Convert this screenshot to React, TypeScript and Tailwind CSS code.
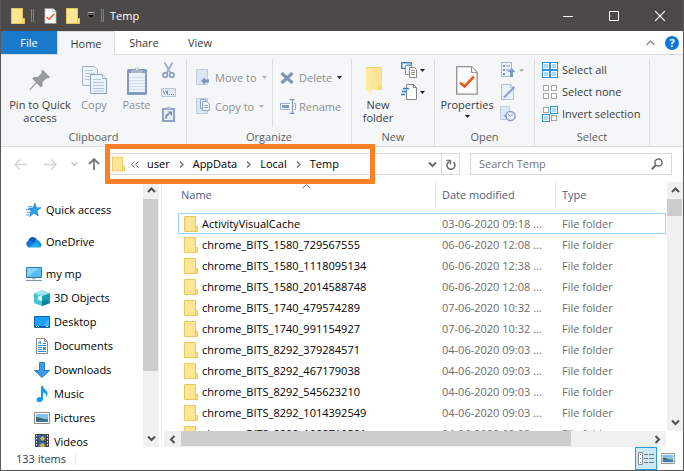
import React from 'react';

type IconProps = { className?: string };

const FolderIcon = ({ className = 'h-4 w-[14px]' }: IconProps) => (
  <svg viewBox="0 0 14 16" className={`${className} shrink-0`} aria-hidden="true">
    <path d="M.5.5h11v10h2v5h-13z" fill="#ffe694" stroke="#ebc75a" />
    <path d="M11.5 10.5v5" stroke="#ebc75a" />
    <path d="M12 11h1v4h-1z" fill="#ffe08a" />
  </svg>
);

const CheckDoc = ({ className = '' }: IconProps) => (
  <svg viewBox="0 0 22 29" className={`${className} shrink-0`} aria-hidden="true">
    <path d="M.7.7h15l5.500 5.500v22H.7z" fill="#fafafa" stroke="#8f9091" strokeWidth="1.300" />
    <path d="M15.500.7v5.700h5.700" fill="#fff" stroke="#8f9091" />
    <path d="M4 16.500l4.500 4L18 10.500" fill="none" stroke="#f05a1e" strokeWidth="2.600" />
  </svg>
);

const PinIcon = () => (
  <svg width="22" height="22" viewBox="0 0 22 22" aria-hidden="true">
    <path d="M12.500 1.500 14 1l7 7-1.500 1.500-2-.3-4 4 .2 3.600-1.800 1.700-4.300-4.300L1.500 21H.7v-1l6-6.800L3.200 9.500 5 7.800l3.700.2 4-4z" fill="#959da0" />
  </svg>
);

const CopyIcon = () => (
  <svg width="25" height="28" viewBox="0 0 25 28" aria-hidden="true">
    <g fill="#eef3fa" stroke="#9fb1ce">
      <path d="M.5.5h12l3 3v16H.5z" />
      <path d="M3 4.500h8M3 7.500h10M3 10.500h10M3 13.500h10" stroke="#b5c6df" />
      <path d="M8.500 8.500h12l4 4v15h-16z" stroke="#8da3c6" />
      <path d="M20.500 8.500v4h4" />
      <path d="M11 13.500h8M11 16.500h11M11 19.500h11M11 22.500h11M11 25h11" stroke="#b5c6df" />
    </g>
  </svg>
);

const PasteIcon = () => (
  <svg width="20" height="29" viewBox="0 0 20 29" aria-hidden="true">
    <rect x="0" y="3" width="20" height="26" rx="1.500" fill="#8299c2" />
    <path d="M2 7h16v19H2z" fill="#edf3fb" />
    <path d="M2 11.500h16M2 14.500h16M2 17.500h16M2 20.500h16M2 23.500h16" stroke="#cfdcef" />
    <path d="M4 7V4h3.500a2.500 2.500 0 0 1 5 0H16v3z" fill="#a9b4c4" />
    <circle cx="10" cy="3" r="1" fill="#f5f6f7" />
  </svg>
);

const CutIcon = () => (
  <svg width="13" height="17" viewBox="0 0 13 17" aria-hidden="true">
    <path d="M2.500.5 8.500 11M10.500.5 4.500 11" stroke="#9eadc6" strokeWidth="1.800" />
    <circle cx="3.200" cy="13" r="2.300" fill="none" stroke="#8299c2" strokeWidth="1.600" />
    <circle cx="9.800" cy="13" r="2.300" fill="none" stroke="#8299c2" strokeWidth="1.600" />
  </svg>
);

const PathIcon = () => (
  <svg width="15" height="9" viewBox="0 0 15 9" aria-hidden="true">
    <path d="M.5.5h14v8H.5z" fill="#dfe9f4" stroke="#b7c7dc" />
    <path d="M2 2.500 4 6.500M4.500 2.500l2 4M6.500 2.500v4" stroke="#7088ad" fill="none" />
    <path d="M8 6h1v1H8zM10 6h1v1h-1zM12 6h1v1h-1z" fill="#7088ad" />
  </svg>
);

const ShortcutIcon = () => (
  <svg width="13" height="16" viewBox="0 0 13 16" aria-hidden="true">
    <path d="M0 2h13v14H0z" fill="#8da2c8" />
    <path d="M2 4h9v10H2z" fill="#e6eef8" />
    <path d="M3.500 3.500V1.500h2a1 1 0 0 1 2 0h2v2z" fill="#a9b4c4" />
    <path d="M4 12.500C4 9.500 5 8.500 7 8.200" stroke="#7088ad" strokeWidth="1.800" fill="none" />
    <path d="M5.500 5.500H10V10z" fill="#7088ad" />
  </svg>
);

const MoveIcon = () => (
  <svg width="14" height="17" viewBox="0 0 14 17" aria-hidden="true">
    <path d="M.5.5h11v15H.5z" fill="#dde7f3" stroke="#bccde2" />
    <path d="M5 12l4-4v2.500h4v3H9V16z" fill="#7f95b8" />
  </svg>
);

const CopyToIcon = () => (
  <svg width="14" height="17" viewBox="0 0 14 17" aria-hidden="true">
    <path d="M.5.5h11v15H.5z" fill="#dde7f3" stroke="#bccde2" />
    <path d="M4.500 1.500h5v9h-5z" fill="#eef3fa" stroke="#92a7c6" />
    <path d="M6.500 3.500h4.500l2.500 2.500v6.500h-7z" fill="#eef3fa" stroke="#92a7c6" />
    <path d="M8 7.500h4M8 9.500h4" stroke="#92a7c6" />
  </svg>
);

const DeleteIcon = () => (
  <svg width="14" height="12" viewBox="0 0 14 12" aria-hidden="true">
    <path d="M1.500 1 12.500 11M12.500 1 1.500 11" stroke="#7f95b8" strokeWidth="3.200" />
  </svg>
);

const RenameIcon = () => (
  <svg width="16" height="15" viewBox="0 0 16 15" aria-hidden="true">
    <path d="M10 4.500H.5v6H10M14 4.500h1.500v6H14" fill="none" stroke="#9db0cc" />
    <path d="M2 6h7v3H2z" fill="#8299c2" />
    <path d="M9.500.5h5M9.500 14.500h5M12.500.5v14" stroke="#8299c2" strokeWidth="1.300" />
  </svg>
);

const BigFolder = () => (
  <svg width="24" height="27" viewBox="0 0 24 27" aria-hidden="true">
    <path d="M0 0h14l2 1v22H5L0 21z" fill="#f5d064" />
    <path d="M2 1h13.500v22H5z" fill="#fde597" />
    <path d="M0 0l5 4v23l-5-5z" fill="#ffe9a6" />
    <path d="M12 18h3.500v5H12z" fill="#f8da78" />
  </svg>
);

const NewItemIcon = () => (
  <svg width="16" height="16" viewBox="0 0 16 16" aria-hidden="true">
    <path d="M.5.5h10v6H.5z" fill="#8fcaf0" stroke="#5b7894" />
    <path d="M2 2h3v3H2z" fill="#fff" />
    <path d="M4.500 3.500h6v9h-6z" fill="#eaf4fd" stroke="#8b98a5" />
    <path d="M8.500 5.500h5l2 2v8h-7z" fill="#fff" stroke="#888" />
    <path d="M10 8.500h4M10 10.500h4M10 12.500h4" stroke="#b98a79" />
  </svg>
);

const EasyAccessIcon = () => (
  <svg width="16" height="16" viewBox="0 0 16 16" aria-hidden="true">
    <path d="M5.500.5h7l3 3v12h-10z" fill="#fff" stroke="#858585" />
    <path d="M12.500.5v3h3" fill="none" stroke="#858585" />
    <path d="M2 4.500h6M1 7.500h5M0 10.500h4" stroke="#2583ce" strokeWidth="1.500" />
  </svg>
);

const OpenIcon = () => (
  <svg width="14" height="16" viewBox="0 0 14 16" aria-hidden="true">
    <path d="M.5.5h10v14H.5z" fill="#edf3fa" stroke="#a5b8d4" />
    <path d="M2 3h2v2H2zM2 7h2v2H2zM2 11h2v2H2z" fill="#7f95b8" />
    <path d="M5 4h4M5 8h3" stroke="#a5b8d4" strokeWidth="1.500" />
    <path d="M10.500 6l4 4h-2.500v5H9v-5H6.500z" fill="#8299c2" />
  </svg>
);

const EditIcon = () => (
  <svg width="14" height="16" viewBox="0 0 14 16" aria-hidden="true">
    <path d="M.5.5h9l3 3v12H.5z" fill="#e9f0f8" stroke="#b0c1da" />
    <path d="M9.500.5v3h3" fill="none" stroke="#b0c1da" />
    <path d="M3 13.500 13.500 3" stroke="#8da2c8" strokeWidth="2" />
  </svg>
);

const HistoryIcon = () => (
  <svg width="16" height="16" viewBox="0 0 16 16" aria-hidden="true">
    <path d="M.5.5h9v13h-9z" fill="#dde7f3" stroke="#bccde2" />
    <circle cx="10.500" cy="10" r="4.600" fill="#edf3fa" stroke="#8da2c8" strokeWidth="1.500" />
    <path d="M8 8l2.500 2.500L13 7.500" fill="none" stroke="#8299c2" />
    <path d="M3 9h4v3z" fill="#8299c2" />
  </svg>
);

const Squares = ({ filled }: { filled: boolean[] }) => (
  <svg width="16" height="16" viewBox="0 0 16 16" className="shrink-0" aria-hidden="true">
    {filled.map((on, i) => {
      const x = (i % 2) * 8;
      const y = Math.floor(i / 2) * 8;
      return on ? (
        <g key={i}>
          <rect x={x + 0.5} y={y + 0.5} width="7" height="7" fill="#fff" stroke="#2f94e4" />
          <rect x={x + 2} y={y + 2} width="4" height="4" fill="#a8dafc" />
        </g>
      ) : (
        <rect key={i} x={x + 1.5} y={y + 1.5} width="5" height="5" fill="#fff" stroke="#a7a7a7" />
      );
    })}
  </svg>
);

const Caret = ({ className = 'text-[#b0b0b0]' }: IconProps) => (
  <svg width="5" height="3" viewBox="0 0 5 3" className={`${className} shrink-0`} aria-hidden="true">
    <path d="M0 0h5L2.500 3z" fill="currentColor" />
  </svg>
);

const angles = {
  up: 'M1 5l3.500-3.500L8 5',
  down: 'M1 1.500L4.500 5 8 1.500',
};

const Angle = ({ dir, className = 'text-[#505050]' }: { dir: 'up' | 'down'; className?: string }) => (
  <svg width="9" height="7" viewBox="0 0 9 7" className={className} aria-hidden="true">
    <path d={angles[dir]} fill="none" stroke="currentColor" strokeWidth="2" />
  </svg>
);

const SideAngle = ({ left = false }: { left?: boolean }) => (
  <svg width="7" height="9" viewBox="0 0 7 9" aria-hidden="true">
    <path d={left ? 'M5.500 1L2 4.500 5.500 8' : 'M1.500 1L5 4.500 1.500 8'} fill="none" stroke="#505050" strokeWidth="2" />
  </svg>
);

const StarIcon = () => (
  <svg width="15" height="14" viewBox="0 0 15 14" aria-hidden="true">
    <path d="M9 0l1.300 4.700H15L11 7.800l1.300 5.200L8 10.200 3.500 13.500 5 8 2.500 5h4.200z" fill="#2ba1ee" stroke="#1577c2" strokeWidth=".6" />
    <path d="M0 6.500h4M2 3.500h4M1 9.500h3M0 12h3" stroke="#4aa9e8" />
  </svg>
);

const CloudIcon = () => (
  <svg width="17" height="12" viewBox="0 0 17 12" aria-hidden="true">
    <path d="M3.500 5A4.500 4.500 0 0 1 12 3.500L9 8z" fill="#0a5fb8" />
    <path d="M4 11.500a3.700 3.700 0 0 1-.5-7C6 4 8 6 11 8z" fill="#1579d3" />
    <path d="M9.500 6.500C10.500 3 14.500 3.500 14.500 6a3 3 0 0 1 1 5z" fill="#1490df" />
    <path d="M3 11.500 10 7l6 3.500c-.5 1-1 1-2 1z" fill="#29a8ea" />
  </svg>
);

const ComputerIcon = () => (
  <svg width="16" height="15" viewBox="0 0 16 15" aria-hidden="true">
    <path d="M.5.5h15v10H.5z" fill="#5bbdf8" stroke="#38759f" />
    <path d="M1 10V1h12z" fill="#8ad3fb" />
    <path d="M6 11h4v1.500H6z" fill="#b9c4cc" />
    <path d="M0 13.500h16" stroke="#8096a8" />
  </svg>
);

const CubeIcon = () => (
  <svg width="16" height="16" viewBox="0 0 16 16" aria-hidden="true">
    <path d="M8 0l8 3-8 3-8-3z" fill="#9ae5ec" />
    <path d="M0 3l8 3v10l-8-3z" fill="#48c5d4" />
    <path d="M16 3L8 6v10l8-3z" fill="#16a0b8" />
    <path d="M4 6.500l4-1v5.500l-4-1z" fill="#d3f6f8" />
    <path d="M8 11l5-1 3 3-8 3z" fill="#0d7f9b" />
  </svg>
);

const DesktopIcon = () => (
  <svg width="16" height="12" viewBox="0 0 16 12" aria-hidden="true">
    <path d="M.5.5h15v11H.5z" fill="#18a0fb" stroke="#0b68ad" />
    <path d="M9 10 15 2v8z" fill="#3eb2ff" />
    <path d="M1 10.500h14" stroke="#0d69b0" />
    <path d="M2 10.500h1M4 10.500h1M12 10.500h2" stroke="#fff" />
  </svg>
);

const DocumentIcon = () => (
  <svg width="12" height="16" viewBox="0 0 12 16" aria-hidden="true">
    <path d="M.5.5h8l3 3v12H.5z" fill="#fff" stroke="#8a8a8a" />
    <path d="M8.500.5v3h3" fill="none" stroke="#8a8a8a" />
    <path d="M2.500 6 4 3l1 3M7 5.500h3M2 7.500h8M2 9.500h4M2 11.500h4M2 13.500h8" stroke="#2b8ad0" fill="none" />
    <path d="M7 9h3v3H7z" fill="#4b91a8" />
  </svg>
);

const DownloadIcon = () => (
  <svg width="16" height="16" viewBox="0 0 16 16" aria-hidden="true">
    <path d="M5.500.5h5v8h5L8 15.500.5 8.500h5z" fill="#3d9be9" stroke="#267fc9" />
  </svg>
);

const MusicIcon = () => (
  <svg width="12" height="16" viewBox="0 0 12 16" aria-hidden="true">
    <path d="M5 0h2c0 3 4.500 4 4.500 7.500 0 1.500-.5 2.500-1 3.500C10.500 8 9 7 7 6.500V13c0 4-7 4-6.500.5C1 11.500 3.500 10.500 5 11.500z" fill="#109af5" />
  </svg>
);

const PictureIcon = ({ className = 'h-3 w-4' }: IconProps) => (
  <svg viewBox="0 0 16 12" preserveAspectRatio="none" className={className} aria-hidden="true">
    <path d="M.5.5h15v11H.5z" fill="#fff" stroke="#8b8b8b" />
    <path d="M2 2h12v8H2z" fill="#83c1ec" />
    <path d="M2 5c4 0 6 3 12 2v1H2z" fill="#386d62" />
    <path d="M2 8h12v2H2z" fill="#3f74a3" />
  </svg>
);

const VideoIcon = () => (
  <svg width="14" height="16" viewBox="0 0 14 16" aria-hidden="true">
    <path d="M0 0h14v16H0z" fill="#454545" />
    <path d="M3 1h8v6H3zM3 8h8v7H3z" fill="#2e67ab" />
    <path d="M5 4l3-2 2 3-3 2zM4 11l4-2 2 3-3 2z" fill="#e4b43b" />
    <path d="M1.500 1v15M12.500 1v15" stroke="#eee" strokeDasharray="1.500 1.500" />
  </svg>
);

const Group = ({ label, className, children }: { label: string; className: string; children: React.ReactNode }) => (
  <section aria-label={label} className={`flex shrink-0 flex-col pt-1 ${className}`}>
    <div className="flex grow border-r border-[#dedfe1]">
      <div className="flex grow flex-col">
        <div className="flex h-[68px]">{children}</div>
        <div className="text-center leading-5 text-[#5c5f63]">{label}</div>
      </div>
    </div>
  </section>
);

const BigButton = ({ icon, className, children }: { icon: React.ReactNode; className: string; children: React.ReactNode }) => (
  <button className={`flex shrink-0 flex-col items-center pt-[3px] leading-[13px] ${className}`}>
    <span className="flex h-9 items-center">{icon}</span>
    {children}
  </button>
);

const SmallButton = ({ label, icon, caret }: { label: string; icon: React.ReactNode; caret?: string }) => (
  <button aria-label={label} className="flex h-[22px] items-center gap-[3px]">
    <span className="flex w-4 justify-center">{icon}</span>
    {caret && <Caret className={caret} />}
  </button>
);

const RowButton = ({ label, icon, caret }: { label: string; icon: React.ReactNode; caret?: string }) => (
  <button className="flex h-[29px] items-center text-[#8b8e92]">
    <span className="flex w-[19px]">{icon}</span>
    {label}
    {caret && <Caret className={`ml-[5px] ${caret}`} />}
  </button>
);

const TitleMark = () => <span className="h-[13px] w-[3px] border-x border-[#858381]" />;

const NavItem = ({ icon, label, child = false }: { icon: React.ReactNode; label: string; child?: boolean }) => (
  <a href="#" className={`flex h-6 shrink-0 items-center gap-1 ${child ? 'pl-8' : 'pl-6'}`}>
    <span className="flex w-[17px] justify-center">{icon}</span>
    {label}
  </a>
);

const files: [string, string][] = [
  ['ActivityVisualCache', '03-06-2020 09:18 ...'],
  ['chrome_BITS_1580_729567555', '06-06-2020 12:08 ...'],
  ['chrome_BITS_1580_1118095134', '06-06-2020 12:38 ...'],
  ['chrome_BITS_1580_2014588748', '06-06-2020 12:08 ...'],
  ['chrome_BITS_1740_479574289', '07-06-2020 10:32 ...'],
  ['chrome_BITS_1740_991154927', '07-06-2020 10:32 ...'],
  ['chrome_BITS_8292_379284571', '04-06-2020 09:03 ...'],
  ['chrome_BITS_8292_467179038', '04-06-2020 09:03 ...'],
  ['chrome_BITS_8292_545623210', '04-06-2020 09:03 ...'],
  ['chrome_BITS_8292_1014392549', '04-06-2020 09:03 ...'],
  ['chrome_BITS_8292_1088710521', '04-06-2020 09:03 ...'],
];

const TitleBar = () => (
  <header className="flex h-[31px] shrink-0 items-center bg-[#4c4a48] pl-[10px] text-white">
    <FolderIcon />
    <div className="flex items-center pl-[6px]">
      <TitleMark />
      <button aria-label="Properties" className="ml-[10px]"><CheckDoc className="h-4 w-[13px]" /></button>
      <button aria-label="New folder" className="ml-[9px]"><FolderIcon /></button>
      <button aria-label="Customize toolbar" className="mr-[6px] ml-[7px]">
        <svg width="8" height="7" viewBox="0 0 8 7"><path d="M.5.5h7" stroke="#aaa" /><path d="M0 2.500h8L4 6.500z" fill="#000" stroke="#999" strokeWidth=".6" /></svg>
      </button>
      <TitleMark />
    </div>
    <h1 className="ml-[6px] grow">Temp</h1>
    <button aria-label="Minimize" className="flex h-full w-[46px] items-center justify-center">
      <svg width="10" height="10"><path d="M0 5.500h10" stroke="#fff" /></svg>
    </button>
    <button aria-label="Maximize" className="flex h-full w-[46px] items-center justify-center">
      <svg width="10" height="10"><path d="M.5.5h9v9h-9z" fill="none" stroke="#fff" /></svg>
    </button>
    <button aria-label="Close" className="flex h-full w-[46px] items-center justify-center">
      <svg width="10" height="10"><path d="M0 0l10 10M10 0L0 10" stroke="#fff" strokeWidth="1.200" /></svg>
    </button>
  </header>
);

const Tabs = () => (
  <nav className="flex h-6 shrink-0 border-b border-[#dadbdc] text-[#3c3c3c]">
    <button className="h-[23px] w-14 bg-[#1979ca] text-white">File</button>
    <button className="-mb-px w-[58px] border-x border-t border-[#dadbdc] bg-[#f5f6f7]">Home</button>
    <button className="w-[58px]">Share</button>
    <button className="w-[54px]">View</button>
    <div className="ml-auto flex items-center gap-[10px] pr-1">
      <button aria-label="Collapse ribbon">
        <svg width="9" height="6" viewBox="0 0 9 6"><path d="M.5 5l4-4 4 4" fill="none" stroke="#8d8d8d" strokeWidth="1.300" /></svg>
      </button>
      <button aria-label="Help" className="flex size-[14px] items-center justify-center rounded-full bg-[#0a78d4] font-bold text-white">?</button>
    </div>
  </nav>
);

const Ribbon = () => (
  <div className="flex h-[92px] shrink-0 border-b border-[#dadbdc] bg-[#f5f6f7] pb-1 text-[#3a3d42]">
    <Group label="Clipboard" className="w-[186px]">
      <BigButton className="ml-[6px] w-[66px] whitespace-nowrap" icon={<PinIcon />}>
        <span>Pin to Quick</span><span>access</span>
      </BigButton>
      <BigButton className="w-[42px] text-[#8b8e92]" icon={<CopyIcon />}>Copy</BigButton>
      <BigButton className="w-[43px] text-[#8b8e92]" icon={<PasteIcon />}>Paste</BigButton>
      <div className="ml-[2px] flex flex-col">
        <SmallButton label="Cut" icon={<CutIcon />} />
        <SmallButton label="Copy path" icon={<PathIcon />} />
        <SmallButton label="Paste shortcut" icon={<ShortcutIcon />} />
      </div>
    </Group>
    <Group label="Organize" className="w-[165px]">
      <div className="flex w-[86px] flex-col border-r border-[#dedfe1] pt-1 pl-[9px]">
        <RowButton label="Move to" icon={<MoveIcon />} caret="text-[#b0b0b0]" />
        <RowButton label="Copy to" icon={<CopyToIcon />} caret="text-[#b0b0b0]" />
      </div>
      <div className="flex flex-col pt-1 pl-[7px]">
        <RowButton label="Delete" icon={<DeleteIcon />} caret="text-[#222]" />
        <RowButton label="Rename" icon={<RenameIcon />} />
      </div>
    </Group>
    <Group label="New" className="w-[83px]">
      <BigButton className="ml-[6px] w-10" icon={<BigFolder />}>
        <span>New</span><span>folder</span>
      </BigButton>
      <div className="ml-[3px] flex flex-col">
        <SmallButton label="New item" icon={<NewItemIcon />} caret="text-[#222]" />
        <SmallButton label="Easy access" icon={<EasyAccessIcon />} caret="text-[#222]" />
      </div>
    </Group>
    <Group label="Open" className="w-[100px]">
      <BigButton className="ml-[3px] w-[58px]" icon={<CheckDoc className="h-[29px] w-[22px]" />}>
        Properties
        <span className="flex h-[11px] items-center"><Caret className="text-[#222]" /></span>
      </BigButton>
      <div className="ml-[4px] flex flex-col">
        <SmallButton label="Open" icon={<OpenIcon />} caret="text-[#b0b0b0]" />
        <SmallButton label="Edit" icon={<EditIcon />} />
        <SmallButton label="History" icon={<HistoryIcon />} />
      </div>
    </Group>
    <Group label="Select" className="w-[115px]">
      <div className="flex flex-col pl-[7px]">
        {[
          { label: 'Select all', filled: [true, true, true, true] },
          { label: 'Select none', filled: [false, false, false, false] },
          { label: 'Invert selection', filled: [false, true, true, false] },
        ].map((item) => (
          <button key={item.label} className="flex h-[22px] items-center gap-1 whitespace-nowrap">
            <Squares filled={item.filled} />
            {item.label}
          </button>
        ))}
      </div>
    </Group>
  </div>
);

const AddressRow = () => (
  <div className="flex h-[35px] shrink-0 items-start gap-[10px] pt-[6px] pr-[11px]">
    <div className="flex h-[22px] w-[94px] items-center pl-[13px]">
      <button aria-label="Back"><svg width="13" height="11" viewBox="0 0 13 11"><path d="M13 5.500H1M6 .5l-5 5 5 5" fill="none" stroke="#d4d4d4" strokeWidth="1.500" /></svg></button>
      <button aria-label="Forward" className="ml-[17px]"><svg width="13" height="11" viewBox="0 0 13 11"><path d="M0 5.500h12M7 .5l5 5-5 5" fill="none" stroke="#d4d4d4" strokeWidth="1.500" /></svg></button>
      <button aria-label="Recent locations" className="ml-[14px]"><svg width="7" height="5" viewBox="0 0 7 5"><path d="M.5.5l3 3 3-3" fill="none" stroke="#c4c4c4" strokeWidth="1.300" /></svg></button>
      <button aria-label="Up" className="ml-[10px]"><svg width="12" height="12" viewBox="0 0 12 12"><path d="M6 12V1M1 6l5-5 5 5" fill="none" stroke="#777" strokeWidth="1.800" /></svg></button>
    </div>
    <div className="relative flex h-[22px] grow items-center border border-[#d9d9d9]">
      <FolderIcon className="ml-[6px] h-4 w-[13px]" />
      <svg width="8" height="7" viewBox="0 0 8 7" className="ml-[6px]"><path d="M3.500.5l-3 3 3 3M7.500.5l-3 3 3 3" fill="none" stroke="#666" /></svg>
      <nav aria-label="Path" className="flex items-center gap-[9px] pl-2 text-black">
        {['user', 'AppData', 'Local', 'Temp'].map((part, i) => (
          <React.Fragment key={part}>
            {i > 0 && <svg width="5" height="7" viewBox="0 0 5 7"><path d="M1 .5l3 3-3 3" fill="none" stroke="#777" strokeWidth="1.500" /></svg>}
            <a href="#">{part}</a>
          </React.Fragment>
        ))}
      </nav>
      <button aria-label="Previous locations" className="ml-auto pr-1"><Angle dir="down" className="text-[#6c6c6c]" /></button>
      <button aria-label="Refresh" className="flex h-full w-[18px] items-center justify-center border-l border-[#d9d9d9]">
        <svg width="10" height="11" viewBox="0 0 10 11"><path d="M7.500 3.200a4 4 0 1 1-4.700-.3M.5 1.500h3.800v3.800" fill="none" stroke="#707070" strokeWidth="1.600" /></svg>
      </button>
      <div className="pointer-events-none absolute -top-[10px] -left-px h-10 w-[270px] border-[5px] border-[#ff7f27]" />
    </div>
    <label className="flex h-[22px] w-[202px] shrink-0 items-center border border-[#d9d9d9] pr-2 pl-2">
      <input aria-label="Search Temp" placeholder="Search Temp" className="min-w-0 grow outline-none placeholder:text-[#757575]" />
      <svg width="12" height="12" viewBox="0 0 12 12"><circle cx="7.500" cy="4.500" r="3.600" fill="none" stroke="#6a6a6a" strokeWidth="1.500" /><path d="M5 7L.8 11.200" stroke="#6a6a6a" strokeWidth="2" /></svg>
    </label>
  </div>
);

const Sidebar = () => (
  <aside className="flex w-[161px] shrink-0 border-r border-[#f0f0f0] pr-[2px]">
    <nav className="flex min-h-0 grow flex-col overflow-hidden pt-4 text-black">
      <NavItem icon={<StarIcon />} label="Quick access" />
      <div className="h-2 shrink-0" />
      <NavItem icon={<CloudIcon />} label="OneDrive" />
      <div className="h-2 shrink-0" />
      <NavItem icon={<ComputerIcon />} label="my mp" />
      <NavItem child icon={<CubeIcon />} label="3D Objects" />
      <NavItem child icon={<DesktopIcon />} label="Desktop" />
      <NavItem child icon={<DocumentIcon />} label="Documents" />
      <NavItem child icon={<DownloadIcon />} label="Downloads" />
      <NavItem child icon={<MusicIcon />} label="Music" />
      <NavItem child icon={<PictureIcon />} label="Pictures" />
      <NavItem child icon={<VideoIcon />} label="Videos" />
    </nav>
    <div className="flex w-4 shrink-0 flex-col bg-[#f0f0f0]">
      <button aria-label="Scroll up" className="flex h-[17px] items-center justify-center"><Angle dir="up" /></button>
      <div className="mr-px h-[172px] bg-[#cdcdcd]" />
      <button aria-label="Scroll down" className="mt-auto flex h-[17px] items-center justify-center"><Angle dir="down" /></button>
    </div>
  </aside>
);

const FileList = () => (
  <main className="flex min-w-0 grow flex-col">
    <div className="flex min-h-0 grow">
      <div className="relative min-w-0 grow overflow-hidden pr-px pl-4">
        <svg width="9" height="5" viewBox="0 0 9 5" className="absolute top-[2px] left-[140px]"><path d="M.5 4.500l4-4 4 4" fill="none" stroke="#777" /></svg>
        <table className="w-full table-fixed border-collapse text-left">
          <thead className="text-[#4c607a]">
            <tr className="h-[31px] align-top">
              <th className="w-[258px] p-0 font-normal"><div className="h-[25px] border-r border-[#e5e5e5] pl-[3px] leading-[25px]">Name</div></th>
              <th className="w-[120px] p-0 font-normal"><div className="h-[25px] border-r border-[#e5e5e5] pl-[6px] leading-[25px]">Date modified</div></th>
              <th className="p-0 font-normal"><div className="pl-[6px] leading-[25px]">Type</div></th>
            </tr>
          </thead>
          <tbody className="text-[#6d6d6d]">
            {files.map(([name, date], i) => (
              <tr key={name} className={i === 0 ? 'h-[21px] outline-1 -outline-offset-1 outline-[#99d1ff]' : 'h-[21px]'}>
                <td className="p-0 text-black">
                  <div className="flex items-center gap-1 pl-[6px]"><FolderIcon />{name}</div>
                </td>
                <td className="truncate p-0 pl-[6px]">{date}</td>
                <td className="p-0 pl-[6px]">File folder</td>
              </tr>
            ))}
          </tbody>
        </table>
      </div>
      <div className="flex w-4 shrink-0 flex-col bg-[#f0f0f0]">
        <button aria-label="Scroll up" className="flex h-[17px] items-center justify-center"><Angle dir="up" /></button>
        <div className="mr-px h-[17px] bg-[#cdcdcd]" />
        <button aria-label="Scroll down" className="mt-auto flex h-[17px] items-center justify-center"><Angle dir="down" /></button>
      </div>
    </div>
    <div className="mr-[17px] ml-[2px] flex h-4 shrink-0 bg-[#f0f0f0]">
      <button aria-label="Scroll left" className="flex w-[17px] items-center justify-center"><SideAngle left /></button>
      <div className="mb-px w-[390px] bg-[#cdcdcd]" />
      <button aria-label="Scroll right" className="ml-auto flex w-[17px] items-center justify-center"><SideAngle /></button>
    </div>
  </main>
);

const StatusBar = () => (
  <footer className="flex h-[23px] shrink-0 items-center pr-2 pl-[15px] text-[#1e395b]">
    <span className="flex h-3 w-[60px] items-center border-r border-[#e8e8e8] whitespace-nowrap">133 items</span>
    <button aria-label="Details view" className="ml-auto flex h-full w-[22px] items-center justify-center border border-[#26a0da] bg-[#cbe8f6]">
      <svg width="16" height="13" viewBox="0 0 16 13">
        <path d="M.5.5h4v12h-4z" fill="#fff" stroke="#8a8a8a" />
        <path d="M2 2.500h1M2 6.500h1M2 10.500h1" stroke="#3576a8" />
        <path d="M6 2.500h4M6 6.500h4M6 10.500h4M11 2.500h5M11 6.500h5M11 10.500h5" stroke="#777" />
      </svg>
    </button>
    <button aria-label="Thumbnail view" className="ml-1"><PictureIcon className="h-[11px] w-[14px]" /></button>
  </footer>
);

export default function App() {
  return (
    <div className="flex h-screen flex-col overflow-hidden border-x border-b border-[#5a5857] bg-white font-['Open_Sans','Noto_Sans',sans-serif] text-[11px] leading-4">
      <TitleBar />
      <Tabs />
      <Ribbon />
      <AddressRow />
      <div className="flex min-h-0 grow">
        <Sidebar />
        <FileList />
      </div>
      <StatusBar />
    </div>
  );
}
